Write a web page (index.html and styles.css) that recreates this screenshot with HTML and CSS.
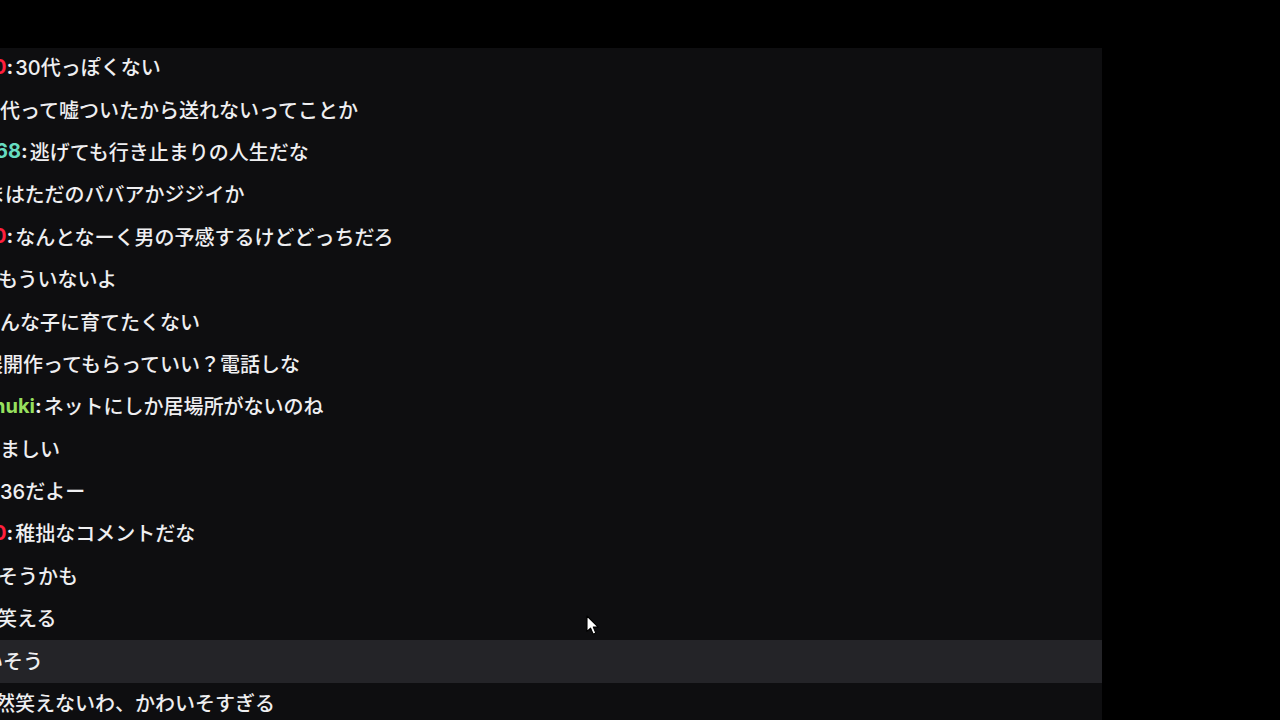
FILE: index.html
```html
<!DOCTYPE html>
<html lang="ja">
<head>
<meta charset="utf-8">
<link rel="stylesheet" href="styles.css">
</head>
<body>
<div class="screen">
  <div class="topbar"></div>
  <div class="main">
    <div class="chat">
      <div class="list">
        <div class="row"><span class="name red s-red">0</span><span class="colon">:</span><span class="text">30代っぽくない</span></div>
        <div class="row"><span class="text">代って嘘ついたから送れないってことか</span></div>
        <div class="row"><span class="name teal s-5">68</span><span class="colon">:</span><span class="text">逃げても行き止まりの人生だな</span></div>
        <div class="row"><span class="text s-15">まはただのババアかジジイか</span></div>
        <div class="row"><span class="name red s-red">0</span><span class="colon">:</span><span class="text">なんとなーく男の予感するけどどっちだろ</span></div>
        <div class="row"><span class="text s-2">もういないよ</span></div>
        <div class="row"><span class="text">んな子に育てたくない</span></div>
        <div class="row"><span class="text s-17">展開作ってもらっていい？電話しな</span></div>
        <div class="row"><span class="name green s-6">nuki</span><span class="colon">:</span><span class="text">ネットにしか居場所がないのね</span></div>
        <div class="row"><span class="text">ましい</span></div>
        <div class="row"><span class="text">36だよー</span></div>
        <div class="row"><span class="name red s-red">0</span><span class="colon">:</span><span class="text">稚拙なコメントだな</span></div>
        <div class="row"><span class="text s-2">そうかも</span></div>
        <div class="row"><span class="text s-3">笑える</span></div>
        <div class="row hover"><span class="text s-17">いそう</span></div>
        <div class="row"><span class="text s-5">然笑えないわ、かわいそすぎる</span></div>
      </div>
      <svg class="cursor" width="14" height="21" viewBox="0 0 14 21" aria-hidden="true">
        <path d="M1 1 L1 16.5 L4.6 13.1 L7.2 19.2 L9.8 18.1 L7.3 12.1 L12.2 12.1 Z" fill="#ffffff" stroke="#000000" stroke-width="1.1" stroke-linejoin="round"/>
      </svg>
    </div>
    <div class="side"></div>
  </div>
</div>
</body>
</html>
```
FILE: styles.css
```css
html, body {
  margin: 0;
  padding: 0;
  background: #000000;
}
.screen {
  width: 1280px;
  height: 720px;
  display: flex;
  flex-direction: column;
  overflow: hidden;
}
.topbar {
  height: 48px;
  flex: none;
  background: #000000;
}
.main {
  flex: 1;
  display: flex;
  min-height: 0;
}
.chat {
  width: 1102px;
  flex: none;
  background: #0e0e10;
  overflow: hidden;
  position: relative;
}
.side {
  flex: 1;
  background: #000000;
}
.list {
  display: flex;
  flex-direction: column;
  margin-top: -1px;
}
.row {
  height: 42.4px;
  box-sizing: border-box;
  padding-bottom: 3px;
  flex: none;
  display: flex;
  align-items: center;
  white-space: nowrap;
  font-family: Inter, "Noto Sans CJK JP", sans-serif;
  font-size: 20px;
  font-weight: 500;
  color: #efeff1;
}
.row.hover {
  background: #242428;
}
.name {
  font-weight: 700;
}
.colon {
  font-weight: 700;
  margin-right: 2px;
}
.red { color: #ff1f3d; }
.teal { color: #66dcc0; }
.green { color: #97e05e; }
.s-red { margin-left: -7px; }
.s-2 { margin-left: -2px; }
.s-3 { margin-left: -3px; }
.s-5 { margin-left: -5px; }
.s-6 { margin-left: -7px; }
.s-15 { margin-left: -15px; }
.s-17 { margin-left: -17px; }
.cursor {
  position: absolute;
  left: 586px;
  top: 567px;
}
```
